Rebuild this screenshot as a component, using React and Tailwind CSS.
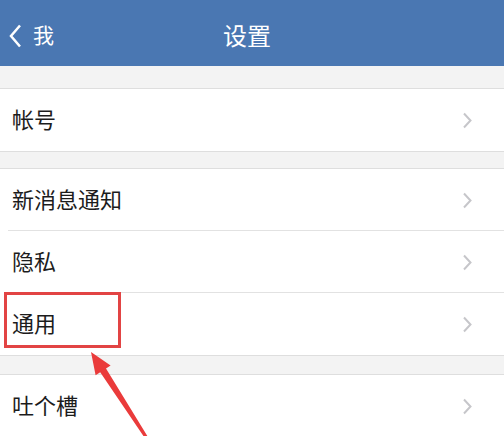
import React from 'react';

const font = { fontFamily: '"Noto Sans CJK SC", "Noto Sans", sans-serif' };

function Chevron() {
  return (
    <svg width="10" height="17" viewBox="0 0 10 17" className="shrink-0">
      <polyline points="2,1.5 8.5,8.5 2,15.5" fill="none" stroke="#c6c6ca" strokeWidth="2" />
    </svg>
  );
}

function Row({ label, last }) {
  return (
    <div className="h-[62px] flex items-center justify-between pl-[12px] pr-[32px] relative bg-white">
      <span className="text-[22px] text-[#1c1c1c] leading-none pb-[4px]">{label}</span>
      <Chevron />
      {!last && <div className="absolute bottom-0 left-[8px] right-0 h-px bg-[#e2e2e2]" />}
    </div>
  );
}

function Section({ items }) {
  return (
    <div className="border-y border-[#dedede] bg-white">
      {items.map((item, i) => (
        <Row key={item} label={item} last={i === items.length - 1} />
      ))}
    </div>
  );
}

export default function App() {
  return (
    <div className="w-[504px] h-[436px] overflow-hidden relative bg-[#f3f3f3]" style={font}>
      {/* header */}
      <div className="h-[66px] bg-[#4a77b2] flex items-center pt-[6px] relative">
        <div className="flex items-center gap-[11px] pl-[9px]">
          <svg width="13" height="24" viewBox="0 0 13 24">
            <polyline points="11,1.5 2,12 11,22.5" fill="none" stroke="#fff" strokeWidth="2.5" />
          </svg>
          <span className="text-white text-[21px] leading-none pb-[3px]">我</span>
        </div>
        <div className="absolute inset-x-0 top-[6px] bottom-0 flex items-center justify-center">
          <span className="text-white text-[24px] leading-none ml-[-10px] pb-[3px]">设置</span>
        </div>
      </div>

      <div className="h-[22px]" />
      <Section items={['帐号']} />
      <div className="h-[16px]" />
      <Section items={['新消息通知', '隐私', '通用']} />
      <div className="h-[18px]" />
      <Section items={['吐个槽', '']} />

      {/* annotation box */}
      <div className="absolute left-[4px] top-[292px] w-[117px] h-[56px] border-[3px] border-[#e24444] pointer-events-none" />

      {/* annotation arrow */}
      <svg className="absolute inset-0 pointer-events-none" width="504" height="436" viewBox="0 0 504 436">
        <polygon
          points="91,352 110.6,365.5 106,368.5 149.3,439.2 146.7,440.8 100.2,372.3 95.6,375.3"
          fill="#ea3b3b"
        />
      </svg>
    </div>
  );
}
